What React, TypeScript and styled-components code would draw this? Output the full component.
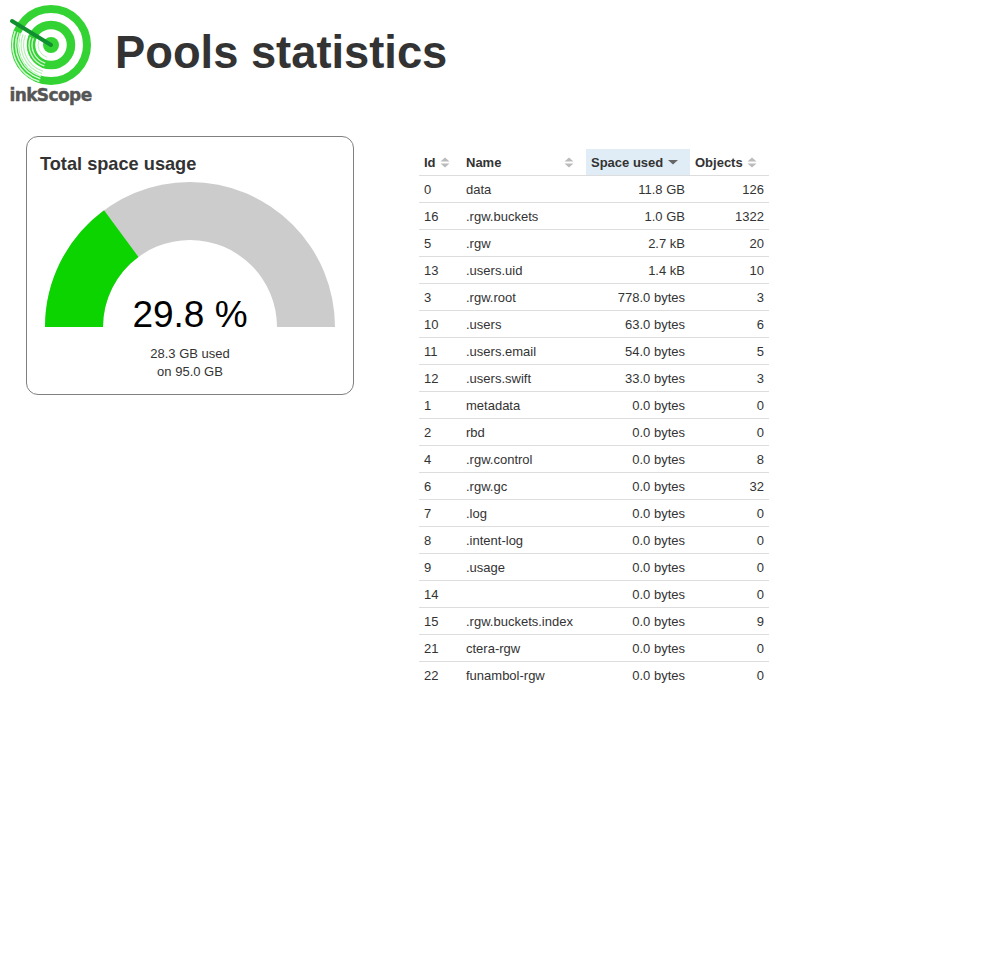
import React from 'react';
import styled, { createGlobalStyle } from 'styled-components';

const GlobalStyle = createGlobalStyle`
	html, body {
		margin: 0;
		padding: 0;
		background: #fff;
		color: #333;
		font-family: 'Liberation Sans', Arial, sans-serif;
		font-size: 13px;
	}
`;

const Page = styled.div`
	width: 985px;
	height: 979px;
	overflow: hidden;
`;

const Header = styled.header`
	display: flex;
	align-items: flex-start;
	height: 136px;
	padding: 5px 0 0 9px;
	box-sizing: border-box;
`;

const Brand = styled.div`
	display: flex;
	flex-direction: column;
	align-items: center;
	width: 84px;
`;

const BrandName = styled.span`
	font-family: 'DejaVu Sans', sans-serif;
	font-weight: 700;
	font-size: 17px;
	line-height: 18px;
	margin: -1px 1px 0 0;
	color: #555;
	letter-spacing: -0.6px;
	white-space: nowrap;
	-webkit-text-stroke: 0.4px #555;
`;

const Title = styled.h1`
	margin: 23px 0 0 22px;
	font-size: 45.3px;
	line-height: 50px;
	font-weight: 700;
	color: #333;
`;

const Content = styled.main`
	display: flex;
	align-items: flex-start;
	padding-left: 26px;
`;

const Card = styled.section`
	box-sizing: border-box;
	width: 328px;
	height: 259px;
	padding: 15px 13px 0;
	border: 1px solid #808080;
	border-radius: 12px;
`;

const CardTitle = styled.h3`
	margin: 0;
	font-size: 18.2px;
	line-height: 24px;
	font-weight: 700;
	color: #333;
`;

const GaugeWrap = styled.div`
	position: relative;
	width: 290px;
	height: 145px;
	margin: 6px 0 0 5px;
`;

const GaugeValue = styled.div`
	position: absolute;
	left: 0;
	right: 0;
	bottom: -10px;
	text-align: center;
	font-size: 37px;
	line-height: 44px;
	color: #000;
`;

const GaugeCaption = styled.div`
	margin-top: 18px;
	text-align: center;
	font-size: 13px;
	line-height: 18px;
	color: #333;
`;

const PoolsTable = styled.table`
	width: 350px;
	margin: 13px 0 0 65px;
	border-collapse: collapse;
	table-layout: fixed;
	font-size: 13px;
`;

const HeadCell = styled.th<{ $width: number; $active?: boolean }>`
	width: ${(props) => props.$width}px;
	height: 26px;
	padding: 1px 5px 0;
	box-sizing: border-box;
	text-align: left;
	font-weight: 700;
	color: #333;
	background: ${(props) => (props.$active ? '#e1edf6' : 'transparent')};
	border-bottom: 1px solid #ddd;
`;

const HeadInner = styled.div<{ $spread?: boolean; $gap?: number }>`
	display: flex;
	align-items: center;
	justify-content: ${(props) => (props.$spread ? 'space-between' : 'flex-start')};
	gap: ${(props) => props.$gap ?? 4}px;
	padding-right: ${(props) => (props.$spread ? 7 : 0)}px;
	white-space: nowrap;
`;

const Row = styled.tr`
	height: 27px;
	border-bottom: 1px solid #ddd;
	&:last-child {
		border-bottom: none;
	}
`;

const Cell = styled.td<{ $right?: boolean }>`
	padding: 1px 5px 0;
	text-align: ${(props) => (props.$right ? 'right' : 'left')};
	color: #333;
	white-space: nowrap;
`;

type SortState = 'none' | 'desc';

const SortIcon: React.FunctionComponent<{ state: SortState }> = ({ state }) => (
	<svg width='10' height='11' viewBox='0 0 10 11' style={{ flex: 'none' }}>
		{state === 'none' && <path d='M5 0.5 L9.5 4.5 H0.5 Z' fill='#bbb' />}
		<path d={state === 'none' ? 'M5 10.5 L9.5 6.5 H0.5 Z' : 'M5 7.5 L10 3 H0 Z'} fill={state === 'none' ? '#bbb' : '#666'} />
	</svg>
);

// arc on the left side of the target, used for the ripple marks
const rippleArc = (r: number): string => `M${42 - r * 0.93} ${40 - r * 0.36} A${r} ${r} 0 0 0 ${42 - r * 0.3} ${40 + r * 0.95}`;

const Logo: React.FunctionComponent = () => (
	<svg width='84' height='82' viewBox='0 0 84 82'>
		<circle cx='42' cy='40' r='36' fill='none' stroke='#33d333' strokeWidth='8' />
		<circle cx='42' cy='40' r='20' fill='none' stroke='#33d333' strokeWidth='8.5' />
		<circle cx='42' cy='40' r='8' fill='#33d333' />
		{[38.5, 35.5, 33].map((r) => (
			<path key={r} d={rippleArc(r)} fill='none' stroke='#fff' strokeWidth='1.5' opacity='0.8' />
		))}
		{[30, 27.5].map((r) => (
			<path key={r} d={rippleArc(r)} fill='none' stroke='#33d333' strokeWidth='1.2' opacity='0.35' />
		))}
		{[22, 19].map((r) => (
			<path key={r} d={rippleArc(r)} fill='none' stroke='#fff' strokeWidth='1.4' opacity='0.75' />
		))}
		<path d={rippleArc(13)} fill='none' stroke='#33d333' strokeWidth='1' opacity='0.35' />
		<line x1='3' y1='16' x2='42' y2='40' stroke='#0f8f2f' strokeWidth='4' strokeLinecap='round' />
	</svg>
);

const Gauge: React.FunctionComponent<{ percent: number }> = ({ percent }) => {
	const outer = 145;
	const inner = 87;
	const angle = (percent / 100) * Math.PI;
	const ox = outer - outer * Math.cos(angle);
	const oy = outer - outer * Math.sin(angle);
	const ix = outer - inner * Math.cos(angle);
	const iy = outer - inner * Math.sin(angle);
	return (
		<svg width='290' height='145' viewBox='0 0 290 145' style={{ display: 'block' }}>
			<path d={`M0 145 A${outer} ${outer} 0 0 1 290 145 H${outer + inner} A${inner} ${inner} 0 0 0 ${outer - inner} 145 Z`} fill='#ccc' />
			<path d={`M0 145 A${outer} ${outer} 0 0 1 ${ox} ${oy} L${ix} ${iy} A${inner} ${inner} 0 0 0 ${outer - inner} 145 Z`} fill='#0bd400' />
		</svg>
	);
};

const pools: [number, string, string, number][] = [
	[0, 'data', '11.8 GB', 126],
	[16, '.rgw.buckets', '1.0 GB', 1322],
	[5, '.rgw', '2.7 kB', 20],
	[13, '.users.uid', '1.4 kB', 10],
	[3, '.rgw.root', '778.0 bytes', 3],
	[10, '.users', '63.0 bytes', 6],
	[11, '.users.email', '54.0 bytes', 5],
	[12, '.users.swift', '33.0 bytes', 3],
	[1, 'metadata', '0.0 bytes', 0],
	[2, 'rbd', '0.0 bytes', 0],
	[4, '.rgw.control', '0.0 bytes', 8],
	[6, '.rgw.gc', '0.0 bytes', 32],
	[7, '.log', '0.0 bytes', 0],
	[8, '.intent-log', '0.0 bytes', 0],
	[9, '.usage', '0.0 bytes', 0],
	[14, '', '0.0 bytes', 0],
	[15, '.rgw.buckets.index', '0.0 bytes', 9],
	[21, 'ctera-rgw', '0.0 bytes', 0],
	[22, 'funambol-rgw', '0.0 bytes', 0],
];

const App: React.FunctionComponent = () => (
	<Page>
		<GlobalStyle />
		<Header>
			<Brand>
				<Logo />
				<BrandName>inkScope</BrandName>
			</Brand>
			<Title>Pools statistics</Title>
		</Header>
		<Content>
			<Card>
				<CardTitle>Total space usage</CardTitle>
				<GaugeWrap>
					<Gauge percent={29.8} />
					<GaugeValue>29.8 %</GaugeValue>
				</GaugeWrap>
				<GaugeCaption>
					28.3 GB used
					<br />
					on 95.0 GB
				</GaugeCaption>
			</Card>
			<PoolsTable>
				<thead>
					<tr>
						<HeadCell $width={42}>
							<HeadInner>
								Id <SortIcon state='none' />
							</HeadInner>
						</HeadCell>
						<HeadCell $width={125}>
							<HeadInner $spread>
								Name <SortIcon state='none' />
							</HeadInner>
						</HeadCell>
						<HeadCell $width={104} $active>
							<HeadInner $gap={5}>
								Space used <SortIcon state='desc' />
							</HeadInner>
						</HeadCell>
						<HeadCell $width={79}>
							<HeadInner>
								Objects <SortIcon state='none' />
							</HeadInner>
						</HeadCell>
					</tr>
				</thead>
				<tbody>
					{pools.map(([id, name, space, objects]) => (
						<Row key={id}>
							<Cell>{id}</Cell>
							<Cell>{name}</Cell>
							<Cell $right>{space}</Cell>
							<Cell $right>{objects}</Cell>
						</Row>
					))}
				</tbody>
			</PoolsTable>
		</Content>
	</Page>
);

export default App;
